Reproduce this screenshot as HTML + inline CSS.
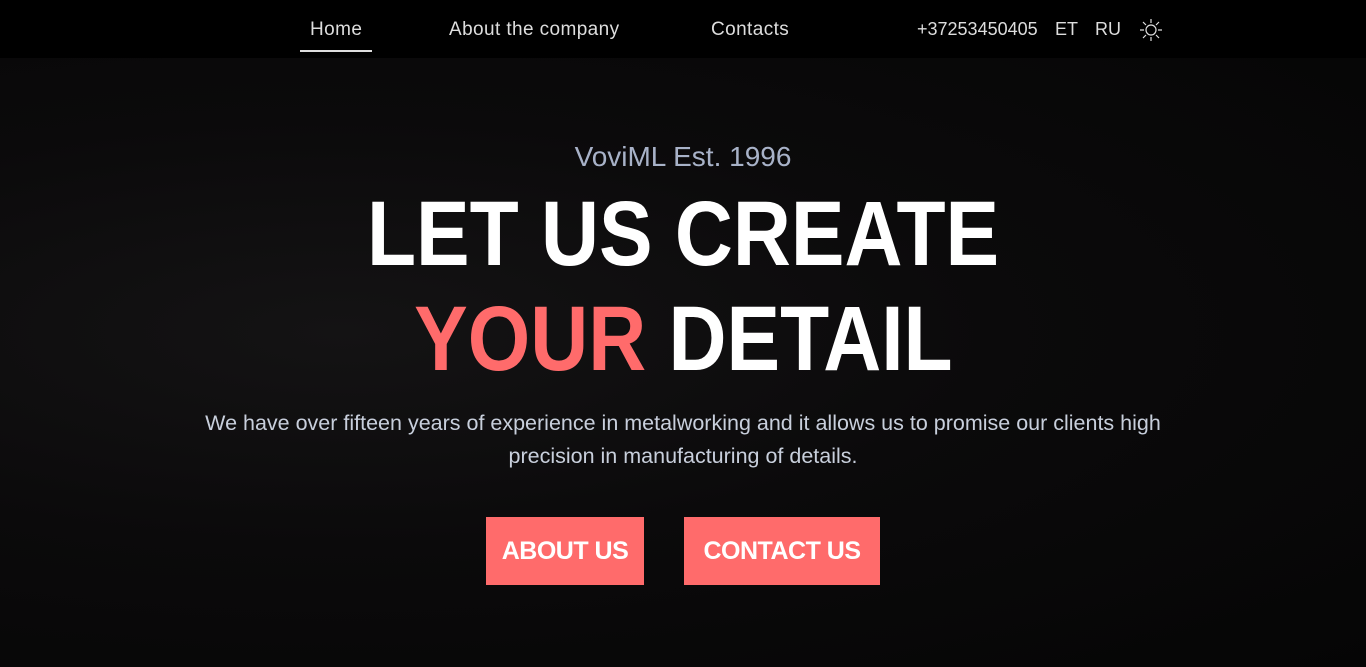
<!DOCTYPE html>
<html><head><meta charset="utf-8"><style>
*{margin:0;padding:0;box-sizing:border-box}
body{width:1366px;height:667px;overflow:hidden;background:#060606;font-family:"Liberation Sans",sans-serif;position:relative}
.bg{position:absolute;left:0;top:58px;width:1366px;height:609px;background:radial-gradient(ellipse at 25% 45%,#141314 0%,#0b0a0b 45%,#050505 100%)}
nav{position:absolute;top:0;left:0;width:1366px;height:58px;background:#000}
.n{position:absolute;top:19px;color:#ddd;font-size:19px;letter-spacing:.4px}
.ul{position:absolute;left:300px;top:50px;width:72px;height:2px;background:#ddd}
.c{position:absolute;left:0;width:1366px;text-align:center}
.h{font-weight:bold;color:#fff;font-size:92px;line-height:1;white-space:nowrap}
.h span.s{display:inline-block;transform:scaleX(.873)}
.btn{position:absolute;top:517px;height:68px;background:#ff6b6b;color:#fff;font-weight:bold;font-size:25px;line-height:68px;text-align:center;letter-spacing:-.5px}
</style></head><body>
<div class="bg"></div>
<nav>
<div class="n" style="left:310px">Home</div>
<div class="ul"></div>
<div class="n" style="left:449px">About the company</div>
<div class="n" style="left:711px">Contacts</div>
<div class="n" style="left:917px;font-size:18px;letter-spacing:0">+37253450405</div>
<div class="n" style="left:1055px;font-size:18px;letter-spacing:0">ET</div>
<div class="n" style="left:1095px;font-size:18px;letter-spacing:0">RU</div>
<svg style="position:absolute;left:1139px;top:18px" width="24" height="24" viewBox="0 0 24 24" fill="none" stroke="#ddd" stroke-width="1.2"><circle cx="12" cy="12" r="5"/><path d="M12 1v4M12 19v4M1 12h4M19 12h4M4 4l3 3M17 17l3 3M4 20l3-3M17 7l3-3"/></svg>
</nav>
<div class="c" style="top:141px;font-size:28px;color:#a8b2c8;font-weight:300">VoviML Est. 1996</div>
<div class="c h" style="top:188px"><span class="s">LET US CREATE</span></div>
<div class="c h" style="top:293px"><span class="s"><span style="color:#ff6b6b">YOUR</span> DETAIL</span></div>
<div class="c" style="top:407px;font-size:21.5px;line-height:33px;color:#c8cfdc">We have over fifteen years of experience in metalworking and it allows us to promise our clients high<br>precision in manufacturing of details.</div>
<div class="btn" style="left:486px;width:158px">ABOUT US</div>
<div class="btn" style="left:684px;width:196px">CONTACT US</div>
</body></html>
